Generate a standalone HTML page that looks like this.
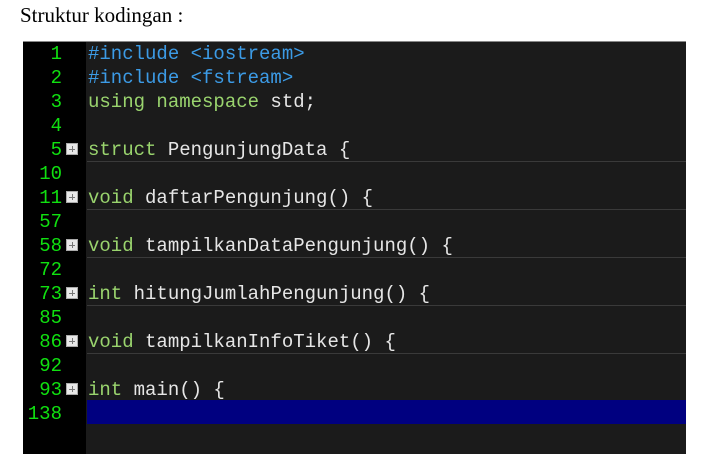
<!DOCTYPE html>
<html><head><style>
body{margin:0;width:705px;height:476px;background:#fff;position:relative;overflow:hidden}
.t{position:absolute;left:20px;top:3px;font:21px "Liberation Serif",serif;color:#000}
.box{position:absolute;left:23px;top:41px;width:663px;height:412px;background:#1b1b1b;border-top:1px solid #888}
.g{position:absolute;left:0;top:0;width:63px;height:412px;background:#000}
.l{position:absolute;left:0;width:663px;height:24px;font:19px/24px "Liberation Mono",monospace;white-space:pre}
.n{position:absolute;left:0;width:39px;text-align:right;color:#10e010}
.c{position:absolute;left:65px;color:#e6e6e6}
.k{color:#9ad46e}.p{color:#3c9be6}
.f{position:absolute;left:43px;top:5px;width:12px;height:12px;background:#e8e8e8;border:1px solid #aaa;box-sizing:border-box}
.f:before{content:"";position:absolute;left:2px;top:5px;width:6px;height:1px;background:#777}
.f:after{content:"";position:absolute;left:5px;top:2px;width:1px;height:6px;background:#777}
.u{position:absolute;left:64px;right:0;top:23px;height:1px;background:#3a3a3a}
.sel{position:absolute;left:64px;width:599px;top:358px;height:24px;background:#000080}
</style></head><body>
<div class="t">Struktur kodingan :</div>
<div class="box"><div class="g"></div><div class="sel"></div>
<div class="l" style="top:0"><span class="n">1</span><span class="c p">#include &lt;iostream&gt;</span></div>
<div class="l" style="top:24px"><span class="n">2</span><span class="c p">#include &lt;fstream&gt;</span></div>
<div class="l" style="top:48px"><span class="n">3</span><span class="c"><span class="k">using namespace</span> std;</span></div>
<div class="l" style="top:72px"><span class="n">4</span></div>
<div class="l" style="top:96px"><span class="n">5</span><span class="f"></span><span class="c"><span class="k">struct</span> PengunjungData {</span><span class="u"></span></div>
<div class="l" style="top:120px"><span class="n">10</span></div>
<div class="l" style="top:144px"><span class="n">11</span><span class="f"></span><span class="c"><span class="k">void</span> daftarPengunjung() {</span><span class="u"></span></div>
<div class="l" style="top:168px"><span class="n">57</span></div>
<div class="l" style="top:192px"><span class="n">58</span><span class="f"></span><span class="c"><span class="k">void</span> tampilkanDataPengunjung() {</span><span class="u"></span></div>
<div class="l" style="top:216px"><span class="n">72</span></div>
<div class="l" style="top:240px"><span class="n">73</span><span class="f"></span><span class="c"><span class="k">int</span> hitungJumlahPengunjung() {</span><span class="u"></span></div>
<div class="l" style="top:264px"><span class="n">85</span></div>
<div class="l" style="top:288px"><span class="n">86</span><span class="f"></span><span class="c"><span class="k">void</span> tampilkanInfoTiket() {</span><span class="u"></span></div>
<div class="l" style="top:312px"><span class="n">92</span></div>
<div class="l" style="top:336px"><span class="n">93</span><span class="f"></span><span class="c"><span class="k">int</span> main() {</span></div>
<div class="l" style="top:360px"><span class="n">138</span></div>
</div>
</body></html>
